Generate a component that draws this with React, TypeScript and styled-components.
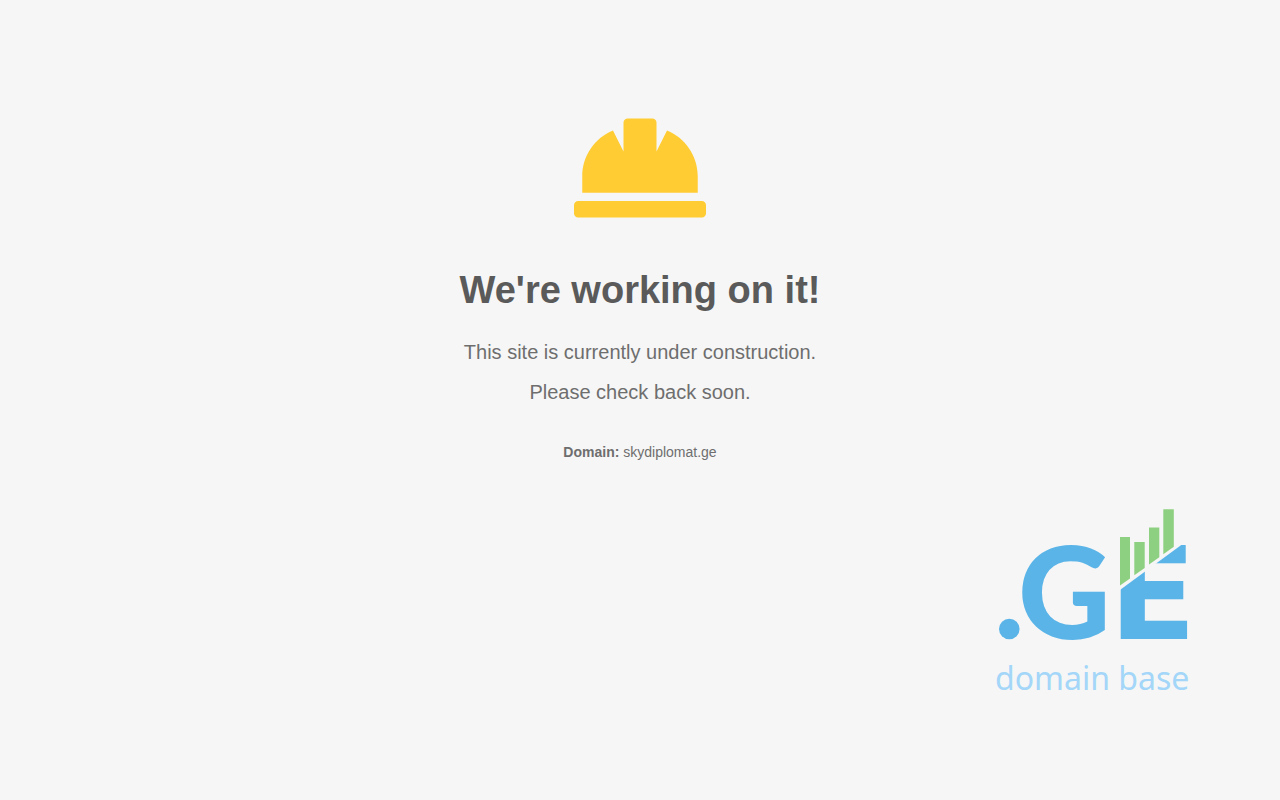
import React from "react";
import styled, { createGlobalStyle } from "styled-components";
import { FaHardHat } from "react-icons/fa";

const GlobalStyle = createGlobalStyle`
  body {
    margin: 0;
    background: #f6f6f6;
    color: #6e6e6e;
    font-family: "Liberation Sans", Arial, sans-serif;
  }
`;

const Page = styled.div`
  display: flex;
  flex-direction: column;
  min-height: 100vh;
`;

const Notice = styled.main`
  display: flex;
  flex-direction: column;
  align-items: center;
  padding: 102px 24px 0;
  text-align: center;
`;

const Helmet = styled(FaHardHat)`
  width: 132px;
  height: 132px;
  color: #ffcc33;
`;

const Title = styled.h1`
  margin: 32px 0 18px;
  color: #5a5a5a;
  font-size: 38px;
  line-height: 48px;
`;

const Message = styled.p`
  margin: 0;
  font-size: 20px;
  line-height: 40px;
`;

const Domain = styled.p`
  margin: 30px 0 0;
  font-size: 14px;
  line-height: 20px;
`;

const Brand = styled.footer`
  display: flex;
  justify-content: flex-end;
  padding: 38px 80px 80px;
`;

const Logo = styled.svg`
  width: 210px;
  height: 200px;
`;

const Letter = styled.text<{ $family: string; $weight: number }>`
  fill: #5ab4e8;
  font-family: "${(p) => p.$family}", sans-serif;
  font-size: 128px;
  font-weight: ${(p) => p.$weight};
`;

const Tagline = styled.text`
  fill: #a3d6f8;
  font-family: "Noto Sans", sans-serif;
  font-size: 32px;
`;

export default function App() {
  return (
    <Page>
      <GlobalStyle />
      <Notice>
        <Helmet aria-hidden="true" />
        <Title>We're working on it!</Title>
        <Message>This site is currently under construction.</Message>
        <Message>Please check back soon.</Message>
        <Domain>
          <strong>Domain:</strong> skydiplomat.ge
        </Domain>
      </Notice>
      <Brand>
        <Logo viewBox="990 500 210 200" role="img" aria-label=".GE domain base">
          <defs>
            <clipPath id="below-slope">
              <polygon points="1110,597.3 1184,543 1200,543 1200,645 1110,645" />
            </clipPath>
          </defs>
          <circle cx="1009.3" cy="629" r="10.3" fill="#5ab4e8" />
          <Letter x="1018" y="639" $family="Lato" $weight={900}>
            G
          </Letter>
          <g clipPath="url(#below-slope)">
            <Letter x="1109" y="639" $family="DejaVu Sans" $weight={700}>
              E
            </Letter>
          </g>
          <g fill="#8ed081">
            <polygon points="1120,537 1130,537 1130,578.5 1120,585.5" />
            <polygon points="1134.3,542 1144.7,542 1144.7,568 1134.3,575.3" />
            <polygon points="1149,527.5 1159.3,527.5 1159.3,557.2 1149,564.5" />
            <polygon points="1163.3,509.3 1173.8,509.3 1173.8,546.8 1163.3,554.3" />
          </g>
          <Tagline x="995" y="690">
            domain base
          </Tagline>
        </Logo>
      </Brand>
    </Page>
  );
}
